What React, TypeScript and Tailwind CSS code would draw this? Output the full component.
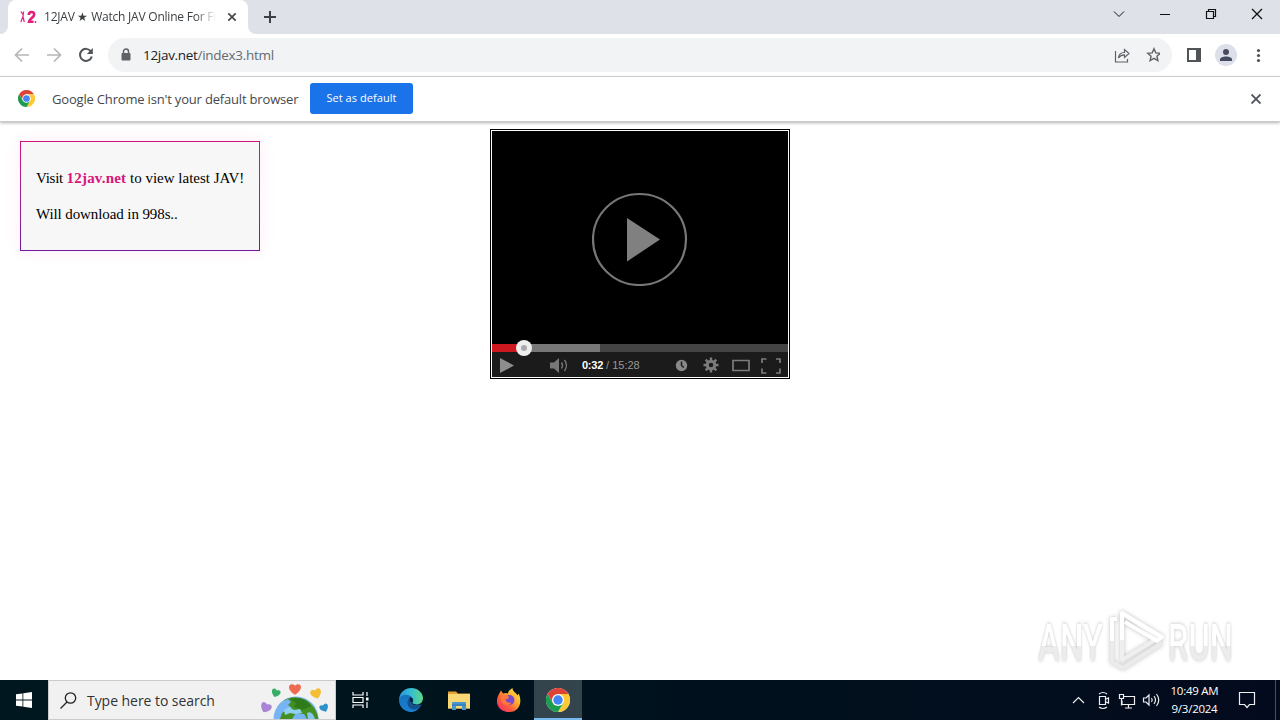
import type { ReactNode } from "react";

const UI_FONT = "font-['Open_Sans','Noto_Sans',sans-serif]";

//          component: 크롬 로고          //
function ChromeLogo({ size }: { size: number }) {
  return (
    <svg width={size} height={size} viewBox="0 0 48 48" className="block shrink-0">
      <circle cx="24" cy="24" r="24" fill="#fff" />
      <path d="M24 12h20.8A24 24 0 0 0 3.2 12l10.4 18z" fill="#dc4437" />
      <path d="M34.4 30 24 48A24 24 0 0 0 44.8 12H24z" fill="#fdc934" />
      <path d="M13.6 30 3.2 12A24 24 0 0 0 24 48l10.4-18z" fill="#1b9c50" />
      <circle cx="24" cy="24" r="12" fill="#fff" />
      <circle cx="24" cy="24" r="9.5" fill="#4285f4" />
    </svg>
  );
}

//          component: 탭 영역          //
function TabStrip() {
  return (
    <div className="flex h-[34px] items-start bg-[#dee1e8]">
      <div className="relative ml-2 flex h-[34px] w-60 items-center rounded-t-lg bg-white pl-3">
        <svg width="8" height="8" className="absolute bottom-0 -left-2">
          <path d="M8 0v8H0a8 8 0 0 0 8-8z" fill="#fff" />
        </svg>
        <svg width="8" height="8" className="absolute -right-2 bottom-0">
          <path d="M0 0v8h8a8 8 0 0 1-8-8z" fill="#fff" />
        </svg>
        <svg width="17" height="16" viewBox="0 0 17 16" fill="none" stroke="#e0207c">
          <path d="M.8 2.500 3 5.500M3.500 2.500 3 8M3 7.500.8 13M3 8l1.300 5" strokeWidth="1.200" />
          <path d="M8.800 6c0-4 5.400-4 5.400-.5 0 3-4.700 3.800-5.200 7.200h4.500" strokeWidth="2.600" />
          <circle cx="15.500" cy="13" r=".9" fill="#e0207c" stroke="none" />
        </svg>
        <div
          className={`${UI_FONT} ml-[7px] w-[172px] text-[12px] leading-4 tracking-[-0.22px] whitespace-nowrap text-[#3c4043] [mask-image:linear-gradient(to_right,#000_88%,transparent)]`}
        >
          12JAV ★ Watch JAV Online For Fr
        </div>
        <svg width="10" height="10" viewBox="0 0 10 10" className="ml-[11px]" stroke="#45494d" strokeWidth="1.700">
          <path d="m1.300 1.300 7.400 7.400M8.700 1.300 1.300 8.700" />
        </svg>
      </div>
      <svg width="14" height="14" viewBox="0 0 14 14" className="mt-[10px] ml-[15px]" stroke="#3c4043" strokeWidth="2">
        <path d="M7 1v12M1 7h12" />
      </svg>
      <svg width="160" height="34" viewBox="1110 0 160 34" className="mr-[10px] ml-auto" fill="none" stroke="#111">
        <path d="m1114 11.500 5 5 5-5" />
        <path d="M1160 14.500h10" />
        <path d="M1206.500 11.500h7v7h-7zM1208.500 11.500v-2h7v7h-2" strokeWidth="1.200" />
        <path d="m1252 9 10 10m0-10-10 10" strokeWidth="1.300" />
      </svg>
    </div>
  );
}

//          component: 주소창          //
function Toolbar() {
  return (
    <div className="flex h-[43px] items-center border-b border-[#d5d7da] bg-white">
      <svg width="100" height="42" viewBox="0 34 100 42" fill="none" strokeWidth="1.700">
        <path d="M29 55H16m6-6.500L15.500 55l6.500 6.500" stroke="#b4b6b9" />
        <path d="M47 55h13m-6-6.500 6.500 6.500-6.500 6.500" stroke="#b4b6b9" />
        <path d="M91 51.500a6 6 0 1 0 .8 5" stroke="#505458" strokeWidth="2" />
        <path d="M92.800 48v6h-6z" fill="#505458" />
      </svg>
      <div className="ml-2 flex h-[34px] w-[1064px] items-center rounded-full bg-[#f1f3f5] pl-[13px]">
        <svg width="10" height="14" viewBox="0 0 10 14">
          <path d="M2.500 6V3.500a2.500 2.500 0 0 1 5 0V6" fill="none" stroke="#5f6368" strokeWidth="1.500" />
          <rect x=".5" y="5" width="9" height="7.500" rx="1" fill="#5f6368" />
        </svg>
        <div className={`${UI_FONT} ml-3 text-[13.500px] leading-5 tracking-[-0.300px] text-[#202124]`}>
          12jav.net<span className="text-[#666a6f]">/index3.html</span>
        </div>
        <svg width="46" height="18" viewBox="1114 46 46 18" className="mr-3 ml-auto" fill="none" stroke="#5f6368" strokeWidth="1.200">
          <path d="M1115.500 51v11h12v-3" />
          <path d="M1118.500 58c.3-4 2.500-5.500 6-5.500V49.500l4.500 4-4.500 4v-2.600c-3 0-4.500.8-6 3.100z" />
          <path d="m1154 48.800 1.800 4.100 4.400.4-3.300 2.900 1 4.400-3.900-2.300-3.900 2.300 1-4.400-3.300-2.900 4.400-.4z" strokeWidth="1.400" />
        </svg>
      </div>
      <svg width="84" height="42" viewBox="1180 34 84 42" className="ml-2">
        <path d="M1187 48h14v14h-14zM1189 50v10h7V50z" fill="#505458" fillRule="evenodd" />
        <circle cx="1226" cy="55" r="11" fill="#dde0e9" />
        <circle cx="1226" cy="52" r="3" fill="#474b60" />
        <path d="M1220 61v-1.500c0-2 3-3 6-3s6 1 6 3V61z" fill="#474b60" />
        <g fill="#505458">
          <circle cx="1258.500" cy="50.500" r="1.600" />
          <circle cx="1258.500" cy="55.500" r="1.600" />
          <circle cx="1258.500" cy="60.500" r="1.600" />
        </g>
      </svg>
    </div>
  );
}

//          component: 기본 브라우저 안내 바          //
function DefaultBrowserBar() {
  return (
    <div className="relative flex h-[45px] items-center border-b border-[#c9cacb] bg-white pl-[18px] shadow-[0_1px_3px_rgba(0,0,0,0.3)]">
      <div className="mb-px">
        <ChromeLogo size={17} />
      </div>
      <div className={`${UI_FONT} ml-[17px] w-[258px] text-[13px] leading-5 tracking-[-0.18px] whitespace-nowrap text-[#45484c]`}>
        Google Chrome isn't your default browser
      </div>
      <button
        type="button"
        className={`${UI_FONT} mb-px h-[31px] w-[103px] rounded-[3px] bg-[#1a73e8] text-[11px] tracking-[0.06px] whitespace-nowrap text-white`}
      >
        Set as default
      </button>
      <svg width="10" height="10" viewBox="0 0 10 10" className="mr-[19px] ml-auto" stroke="#505458" strokeWidth="1.900">
        <path d="m.5.500 9 9m0-9-9 9" />
      </svg>
    </div>
  );
}

//          component: 다운로드 안내 카드          //
function NoticeCard() {
  return (
    <div className="mt-[19px] ml-5 h-[110px] w-60 bg-linear-to-b from-[#d0147e] to-[#701a9c] p-px shadow-[0_0_16px_rgba(255,0,190,0.08)]">
      <div className="h-full bg-[#f7f7f7] px-[15px] pt-[26px] font-['Liberation_Serif',serif] text-[15px] leading-5 whitespace-nowrap text-black">
        <p className="mb-4">
          <span className="tracking-[-0.250px]">Visit </span>
          <b className="tracking-[0.200px] text-[#d8167b]">12jav.net</b> to view latest JAV!
        </p>
        <p className="tracking-[-0.1px]">Will download in 998s..</p>
      </div>
    </div>
  );
}

//          component: 동영상 플레이어          //
function VideoPlayer() {
  return (
    <div className="mt-[7px] h-[250px] w-[300px] border border-black bg-white p-px">
      <div className="flex h-[213px] items-center justify-center bg-black">
        <svg width="96" height="96" viewBox="0 0 96 96">
          <ellipse cx="47.500" cy="49.500" rx="46.500" ry="45.500" fill="none" stroke="#777" strokeWidth="2.200" />
          <path d="M35 28 68 49.500 35 71.500z" fill="#808080" />
        </svg>
      </div>
      <div className="relative flex h-2 bg-[#444]">
        <div className="w-8 bg-[#cc181e]" />
        <div className="w-[76px] bg-[#777]" />
        <div className="absolute -top-1 left-6 flex size-4 items-center justify-center rounded-full bg-[#eee]">
          <div className="size-1.5 rounded-full bg-[#aaa]" />
        </div>
      </div>
      <div className="flex h-[25px] bg-[#1b1b1b]">
        <svg width="90" height="25" viewBox="492 352 90 25" fill="#8e8e8e">
          <path d="m500 358 14 7.500-14 7.500z" />
          <path d="M550 362.500h4l5-4.500v15l-5-4.500h-4z" fill="#777" />
          <path d="M561.500 362.500q2 3 0 6M564.500 360q4 5.500 0 11" fill="none" stroke="#777" strokeWidth="1.400" />
        </svg>
        <div className="w-[76px] font-['Liberation_Sans',sans-serif] text-[11px] leading-[27px] whitespace-nowrap text-[#999]">
          <b className="tracking-[-0.250px] text-white">0:32</b> / 15:28
        </div>
        <svg width="130" height="25" viewBox="658 352 130 25" fill="none" stroke="#7c7c7c">
          <circle cx="681.500" cy="365.500" r="5.700" fill="#888" stroke="none" />
          <path d="M681.500 361.500v4l2.300 2" stroke="#1b1b1b" strokeWidth="1.500" />
          <circle cx="711" cy="365" r="3.800" strokeWidth="3" />
          <g strokeWidth="2.400">
            <path d="M711 357.500v3m0 9v3M703.500 365h3m9 0h3M705.700 359.700l2.100 2.100m6.400 6.400 2.100 2.100M716.300 359.700l-2.100 2.100m-6.400 6.400-2.100 2.100" />
          </g>
          <path d="M733 360.500h16v10h-16z" strokeWidth="1.700" />
          <path d="M762 363v-4h4.500M776 359h4v4M780 368.500v4.500h-4M766.500 373H762v-4.500" strokeWidth="1.700" />
        </svg>
      </div>
    </div>
  );
}

//          component: ANY.RUN 워터마크          //
const markText =
  "inline-block h-[50px] origin-left font-['Roboto',sans-serif] text-[50px] leading-[50px] font-medium bg-linear-to-b from-white from-55% to-[#ececec] to-56% bg-clip-text text-transparent drop-shadow-[0_0_2px_rgba(0,0,0,0.25)]";

function Watermark() {
  return (
    <div className="absolute top-[608px] left-[1038px] flex h-[66px] w-[198px] items-center">
      <div className="w-[66px] pt-1">
        <span className={`${markText} scale-x-[0.66]`}>ANY</span>
      </div>
      <svg width="62" height="66" viewBox="1104 608 62 66" className="shrink-0 overflow-visible drop-shadow-[0_0_2px_rgba(0,0,0,0.25)]" fill="none" strokeWidth="4" strokeLinejoin="round">
        <path d="M1117 619h-5v43l11 6 39-25" stroke="#ebebeb" />
        <path d="M1122 613v47l36-22z" stroke="#efefef" />
        <path d="m1112 641v-22h5M1122 640v-27l40 24-5 4-32-19" stroke="#fff" />
      </svg>
      <div className="w-[66px] pt-1">
        <span className={`${markText} ml-0.5 scale-x-[0.65]`}>RUN</span>
      </div>
    </div>
  );
}

//          component: 작업표시줄 버튼          //
function TaskButton({ children, active }: { children: ReactNode; active?: boolean }) {
  return (
    <div
      className={`flex h-10 items-center justify-center ${active ? "w-12 border-b-2 border-[#76b9ed] bg-[#34444d] pt-0.5" : "w-[49px]"}`}
    >
      {children}
    </div>
  );
}

//          component: 지구와 하트 그림          //
function EarthHearts() {
  const heart = "M0 5.500C-9 0-4.500-6.500 0-2.500 4.500-6.500 9 0 0 5.500z";
  return (
    <svg width="76" height="38" viewBox="260 681 76 38" className="ml-auto">
      <circle cx="297" cy="719" r="22.500" fill="#76b4f3" />
      <path d="M284 701q10-7 23-1 10 6 12.500 19H308l-3-5-8-1-4 6h-12l2-6 5-3 5-2-4-3 3-3-3-3z" fill="#438f22" />
      <path d="M291 699q13-4 21 7l-9 4-8-3 2-4z" fill="#2f7b1a" />
      <path d="m285 710 5-3 5 3 6-1 2 4-7 1-5-1-5 2z" fill="#8fd0ef" />
      <path d="M308 713q5-3 8 6h-7z" fill="#88c5ee" />
      <path d={heart} fill="#ee6a50" transform="translate(296 688.500) scale(1.150)" />
      <path d={heart} fill="#36ae67" transform="translate(277 692.500) rotate(20) scale(.85)" />
      <path d={heart} fill="#f3bd35" transform="translate(317 693) rotate(-20) scale(1.050)" />
      <path d={heart} fill="#a985d5" transform="translate(267 707) rotate(25) scale(1.050)" />
      <path d={heart} fill="#2c91cc" transform="translate(325 707.500) rotate(-25) scale(.85)" />
    </svg>
  );
}

//          component: 작업표시줄          //
function Taskbar() {
  return (
    <div className="flex h-10 bg-linear-to-r from-[#00171f] via-[#00121d] to-[#030a1d]">
      <div className="flex w-12 items-center justify-center">
        <svg width="16" height="16" viewBox="0 0 16 16" fill="#fff">
          <path d="M0 2.300 6.500 1.400v6.200H0zM7.300 1.300 16 0v7.600H7.300zM0 8.400h6.500v6.200L0 13.700zM7.300 8.400H16V16l-8.700-1.200z" />
        </svg>
      </div>
      <div className="flex w-72 items-center border border-[#c9cccd] bg-[#f1f1f2] pl-[11px]">
        <svg width="17" height="17" viewBox="0 0 17 17" fill="none" stroke="#222" strokeWidth="1.300">
          <circle cx="10.500" cy="6" r="5.200" />
          <path d="M7 10 .5 16.500" />
        </svg>
        <div className={`${UI_FONT} mt-px ml-[10px] text-[14px] leading-5 tracking-[-0.050px] whitespace-nowrap text-[#333]`}>
          Type here to search
        </div>
        <EarthHearts />
      </div>
      <TaskButton>
        <svg width="17" height="16" viewBox="0 0 17 16" fill="none" stroke="#fff" strokeWidth="1.200">
          <path d="M1 0v3h10V0M1 5.500h10v5H1zM1 16v-3h10v3M15 0v4M15 10v6" />
          <path d="M14 5.500h2.500v3H14z" fill="#fff" stroke="none" />
        </svg>
      </TaskButton>
      <TaskButton>
        <svg width="24" height="24" viewBox="0 0 24 24" className="ml-0.5">
          <defs>
            <linearGradient id="edgeTop" x1="0" x2="1">
              <stop offset="0" stopColor="#2596dc" />
              <stop offset=".5" stopColor="#35bdd2" />
              <stop offset="1" stopColor="#61d684" />
            </linearGradient>
            <linearGradient id="edgeLow" x1="0" x2="0" y1="0" y2="1">
              <stop offset="0" stopColor="#1673bd" />
              <stop offset="1" stopColor="#1c7fd0" />
            </linearGradient>
          </defs>
          <path d="M0 11C1 4 6 0 12 0c7 0 12 5 12 10 0 6-6 8-10 5.500-1.500-1 1-2 0-4C12 7 5 6 0 11z" fill="url(#edgeTop)" />
          <path d="M0 11c2-5 10-6 13.500-1 1 1.500.5 3-.5 3.800-.5 3.500 4.500 5 9.500 2.700C20 21.500 16 24 12 24 5 24-.5 18 0 11z" fill="url(#edgeLow)" />
          <path d="M12 9c-5 2-5 11 2 12.500 3 .3 6-1 8.500-5-5 2.300-10 .8-9.500-2.700-1-1.300-2-3-1-4.800z" fill="#12508f" />
          <path d="M11 9.500c2-.5 3.500 1.500 2.500 3.500l-.7 1.500c-1.800-1-2.500-3-1.800-5z" fill="#041c29" />
        </svg>
      </TaskButton>
      <TaskButton>
        <svg width="22" height="19" viewBox="0 0 22 19" className="ml-px">
          <path d="M0 .5h8l2 2h12v15H0z" fill="#e4a13a" />
          <path d="M0 3h22v14.500H0z" fill="#f8d775" />
          <path d="M4 19v-7q0-1 1-1h12q1 0 1 1v7h-4v-4H8v4z" fill="#4797ce" />
          <path d="M4 13h14v2H4z" fill="#3984bd" />
        </svg>
      </TaskButton>
      <TaskButton>
        <svg width="24" height="24" viewBox="0 0 24 24" className="ml-0.5">
          <defs>
            <linearGradient id="fox" x1="1" y1="0" x2="0" y2="1">
              <stop offset="0" stopColor="#ffec4f" />
              <stop offset=".35" stopColor="#ffb42f" />
              <stop offset=".65" stopColor="#ff5a3c" />
              <stop offset="1" stopColor="#ed237d" />
            </linearGradient>
          </defs>
          <path d="M2 6 4 2.500l2 3q3-1 5 0C11 3 13 1.500 15.500 0c0 4 4 4.500 5 7.500l1-2C26 14 22 24 12.500 24 1 24-3 14 2 6z" fill="url(#fox)" />
          <circle cx="12.500" cy="12" r="5" fill="#7b48d2" />
          <path d="M4 8.500q5-3 8 .5l-.5 1.500-3 1q1 4 6 3-2 3.500-6 2.500-5-2-4.500-8.500z" fill="#fb7a39" />
        </svg>
      </TaskButton>
      <div className="pl-0.5">
        <TaskButton active>
          <ChromeLogo size={24} />
        </TaskButton>
      </div>
      <svg width="100" height="40" viewBox="1065 680 100 40" className="ml-auto" fill="none" stroke="#eee" strokeWidth="1.200">
        <path d="m1073 703 5.500-5.500 5.500 5.500" />
        <path d="M1099.500 696.500h6v8h-6zM1106 699l2.500-1v5l-2.500-1M1099 694q4-3 8 0M1099 707q4 3 8 0" />
        <path d="M1124 696.500h10.500v8H1122v-4M1128.500 704.500v3M1125 708h7M1119.500 694.500h4v4h-4zM1121.500 698.500v7" />
        <path d="M1143.500 698h2.500l3-3v10l-3-3h-2.500zM1151.500 698q1.500 2 0 4M1154 696q3 4 0 8M1156.500 694q4.500 6 0 12" />
      </svg>
      <div className={`${UI_FONT} w-[59px] pt-0.5 text-center text-[11.500px] leading-[18px] tracking-[-0.250px] whitespace-nowrap text-white`}>
        <div>10:49 AM</div>
        <div>9/3/2024</div>
      </div>
      <svg width="56" height="40" viewBox="1224 680 56 40" fill="none" stroke="#eee" strokeWidth="1.200">
        <path d="M1239.500 692.500h15v12h-5l-2.500 3-2.500-3h-5z" />
        <path d="M1275.500 680v40" stroke="#45505d" strokeWidth="1" />
      </svg>
    </div>
  );
}

//          render: 전체 화면          //
export default function App() {
  return (
    <div className="relative flex h-[720px] w-[1280px] flex-col overflow-hidden bg-white">
      <TabStrip />
      <Toolbar />
      <DefaultBrowserBar />
      <main className="grid flex-1 grid-cols-[490px_300px_1fr] items-start">
        <NoticeCard />
        <VideoPlayer />
      </main>
      <Watermark />
      <Taskbar />
    </div>
  );
}
